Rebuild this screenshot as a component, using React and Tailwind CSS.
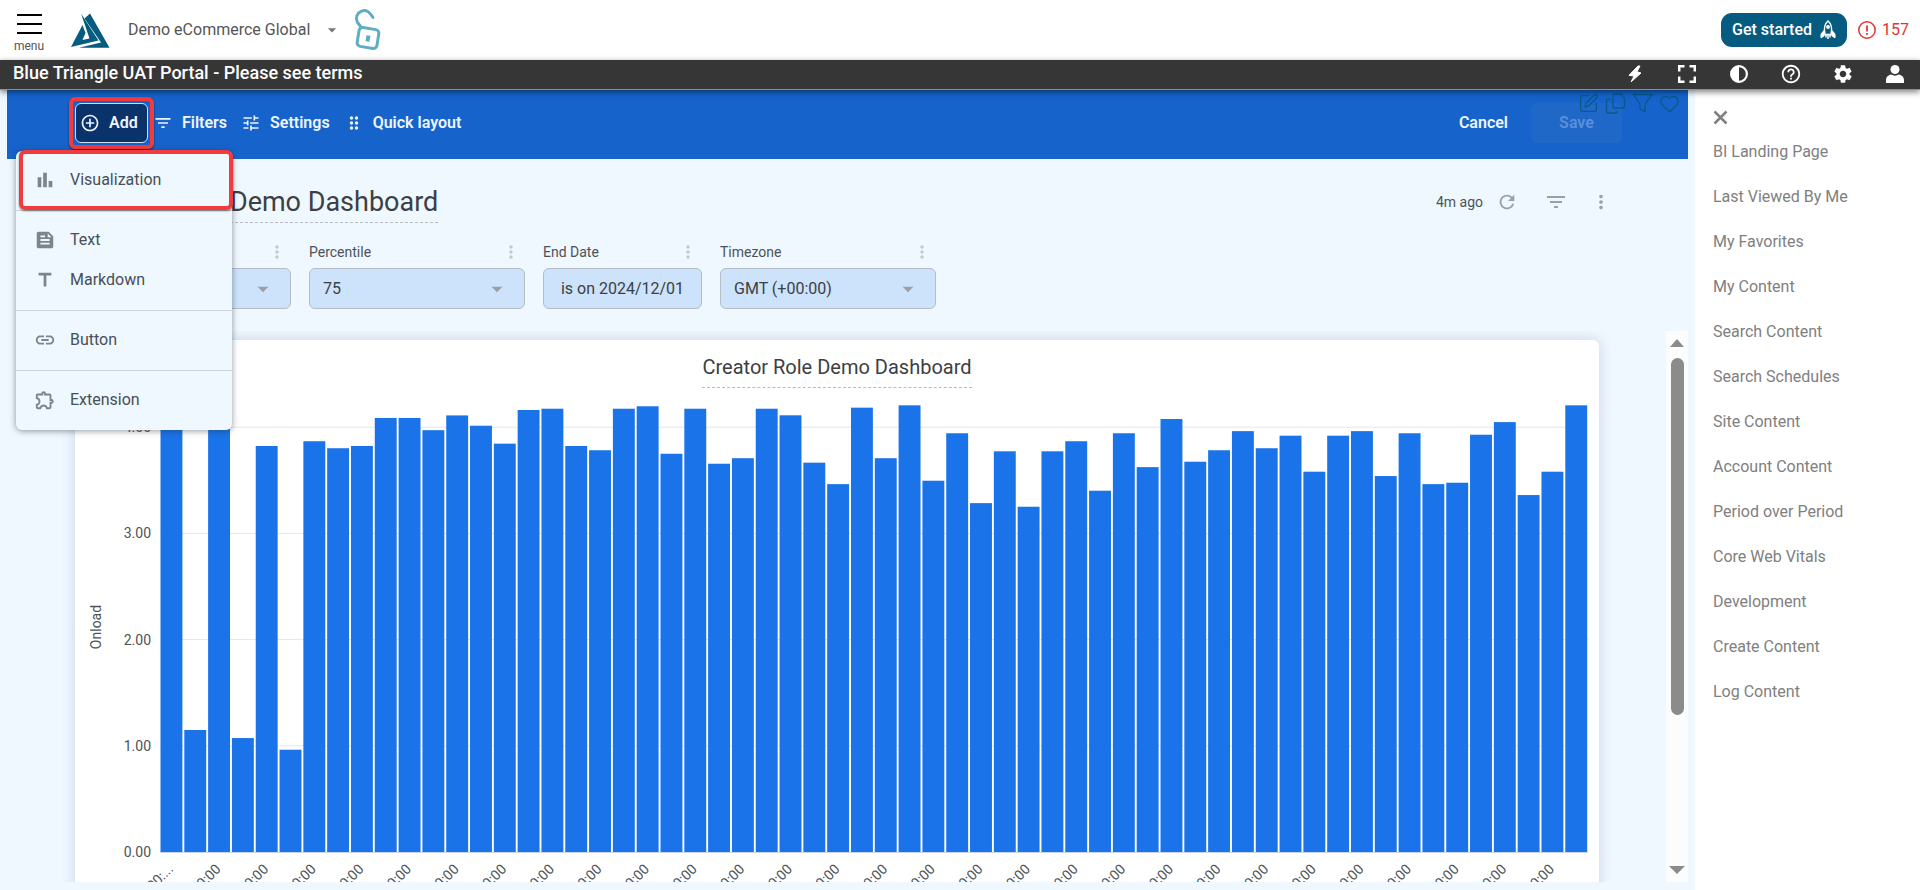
import React, { useState } from 'react';
import {
  MdAddCircleOutline,
  MdArrowDropDown,
  MdBarChart,
  MdDragIndicator,
  MdFeed,
  MdFilterList,
  MdHelpOutline,
  MdLink,
  MdMoreVert,
  MdOutlineExtension,
  MdRefresh,
  MdSettings,
  MdTitle,
  MdTune,
} from 'react-icons/md';
import { FaCircleHalfStroke } from 'react-icons/fa6';
import { Heart, SquarePen } from 'lucide-react';

const ONLOAD = [
  4.1, 1.149, 4.15, 1.073, 3.823, 0.963, 3.868, 3.802, 3.823, 4.087, 4.087, 3.972, 4.111, 4.014, 3.845,
  4.162, 4.174, 3.823, 3.783, 4.174, 4.197, 3.75, 4.174, 3.656, 3.708, 4.174, 4.112, 3.666, 3.464, 4.184,
  3.708, 4.206, 3.496, 3.943, 3.285, 3.773, 3.251, 3.773, 3.868, 3.402, 3.943, 3.624, 4.077, 3.675, 3.783,
  3.963, 3.802, 3.92, 3.581, 3.92, 3.963, 3.54, 3.943, 3.464, 3.477, 3.929, 4.048, 3.361, 3.581, 4.206,
];

const MENU_SECTIONS = [
  [{ label: 'Visualization', icon: MdBarChart, highlighted: true }],
  [
    { label: 'Text', icon: MdFeed },
    { label: 'Markdown', icon: MdTitle },
  ],
  [{ label: 'Button', icon: MdLink }],
  [{ label: 'Extension', icon: MdOutlineExtension }],
];

const SIDE_LINKS = [
  'BI Landing Page',
  'Last Viewed By Me',
  'My Favorites',
  'My Content',
  'Search Content',
  'Search Schedules',
  'Site Content',
  'Account Content',
  'Period over Period',
  'Core Web Vitals',
  'Development',
  'Create Content',
  'Log Content',
];

function Logo() {
  return (
    <svg width="40" height="36" viewBox="0 0 40 36" fill="#055b80">
      <path d="M1 35 12.500 13 15.500 21 12.500 28 19.500 26.500 11 1.500 28.500 28.500Z" />
      <path d="M14.500 6.500 20 1.500 39.500 35.700H9L31 30.500Z" />
    </svg>
  );
}

function OpenLock() {
  return (
    <svg width="28" height="44" viewBox="0 0 28 44" fill="none" stroke="#5fadc4" strokeWidth="3" strokeLinecap="round">
      <path d="M7 19 3.500 14.500C1 10 3 5 7 3.500c5-2.500 8 0 12 6" />
      <rect x="4" y="20.500" width="20" height="19" rx="3.500" transform="rotate(9 14 30)" />
      <path d="m14.500 27.500-1 6" strokeWidth="4" strokeLinecap="butt" />
    </svg>
  );
}

function Rocket() {
  return (
    <svg width="16" height="20" viewBox="0 0 16 20" fill="none" stroke="#fff" strokeWidth="1.500">
      <path d="M5 14.500C3.500 8.500 4.500 4 8 1c3.500 3 4.500 7.500 3 13.500Z" />
      <circle cx="8" cy="7" r="1.200" fill="#fff" />
      <path d="M4 10.500 1 14v4l3.500-2.500M12 10.500l3 3.500v4l-3.500-2.500" fill="#fff" strokeWidth="1" />
      <path d="M8 15v4M6 15v2.500M10 15v2.500" />
    </svg>
  );
}

function Header() {
  return (
    <header className="flex h-[60px] shrink-0 items-center bg-white pr-[11px] pl-[15px]">
      <button type="button" className="mt-2 flex w-7 flex-col items-center text-[12px] leading-4 text-[#555]">
        <svg width="25" height="20" viewBox="0 0 25 20" stroke="#000" strokeWidth="2">
          <path d="M0 1h25M0 10h25M0 19h25" />
        </svg>
        <span className="mt-1">menu</span>
      </button>
      <a href="#home" aria-label="Home" className="ml-[27px]">
        <Logo />
      </a>
      <button type="button" className="ml-[18px] flex items-center gap-3 text-[16px] text-[#555]">
        Demo eCommerce Global
        <MdArrowDropDown size={20} className="text-[#777]" />
      </button>
      <span className="ml-3">
        <OpenLock />
      </span>
      <div className="ml-auto flex items-center gap-[11px]">
        <button
          type="button"
          className="flex h-[34px] items-center gap-2 rounded-[11px] bg-[#055b80] px-[11px] text-[16px] font-medium text-white"
        >
          Get started
          <Rocket />
        </button>
        <a href="#alerts" className="flex items-center gap-[6px] text-[16px] text-[#e23434]">
          <svg width="18" height="18" viewBox="0 0 18 18" fill="none" stroke="currentColor" strokeWidth="1.500">
            <circle cx="9" cy="9" r="8.200" />
            <path d="M9 4.500v6M9 12v1.800" strokeWidth="1.800" />
          </svg>
          157
        </a>
      </div>
    </header>
  );
}

function PortalBar() {
  const iconButton = 'flex size-[18px] items-center justify-center';
  return (
    <div className="relative z-20 flex h-[30px] shrink-0 items-center border-b border-[#8f8f8f] bg-[#363636] pr-4 pb-[1px] pl-[13px] text-white shadow-[0_2px_6px_rgba(0,0,0,0.5)]">
      <span className="pb-[3px] text-[18px] leading-6 font-medium">Blue Triangle UAT Portal - Please see terms</span>
      <div className="ml-auto flex items-center gap-[34px]">
        <button type="button" aria-label="Quick actions" className={iconButton}>
          <svg width="18" height="18" viewBox="0 0 18 18" fill="currentColor" stroke="currentColor" strokeLinejoin="round">
            <path d="M12 1 3 10.300l5 .7-2.800 5.800L15 8l-4-1.200L14 1Z" />
          </svg>
        </button>
        <button type="button" aria-label="Full screen" className={iconButton}>
          <svg width="18" height="18" viewBox="0 0 18 18" fill="none" stroke="currentColor" strokeWidth="2.500">
            <path d="M6.500 1.200H1.200V6.500M11.500 1.200H16.800V6.500M6.500 16.800H1.200V11.500M11.500 16.800H16.800V11.500" />
          </svg>
        </button>
        <button type="button" aria-label="Contrast" className={iconButton}>
          <FaCircleHalfStroke size={18} />
        </button>
        <button type="button" aria-label="Help" className={iconButton}>
          <MdHelpOutline size={22} className="shrink-0" />
        </button>
        <button type="button" aria-label="Settings" className={iconButton}>
          <MdSettings size={22} className="shrink-0" />
        </button>
        <button type="button" aria-label="Profile" className={iconButton}>
          <svg width="18" height="18" viewBox="0 0 18 18" fill="currentColor">
            <circle cx="9" cy="4.500" r="4.500" />
            <path d="M0 18v-3c0-3 2.500-5 5-5.500 2.500 1.500 5.500 1.500 8 0 2.500.5 5 2.500 5 5.500v3Z" />
          </svg>
        </button>
      </div>
    </div>
  );
}

function AddMenu() {
  return (
    <div className="absolute top-12 left-[-59px] z-30 w-[216px] rounded-md bg-[#eff7ff] shadow-[0_1px_6px_rgba(40,50,60,0.5)]">
      {MENU_SECTIONS.map((section) => (
        <div key={section[0].label} className="relative border-b border-[#cdd3da] pt-[9px] pb-[10px] last:border-b-0">
          {section.map(({ label, icon: Icon, highlighted }) => (
            <React.Fragment key={label}>
              <button type="button" className="flex h-10 w-full items-center gap-[14px] pl-[18px] text-[16px] text-[#474f57]">
                <Icon size={22} className="text-[#7d848b]" />
                {label}
              </button>
              {highlighted && (
                <span className="pointer-events-none absolute top-[-1px] right-[-1px] bottom-0 left-[3px] rounded-md border-4 border-[#f23b3f] shadow-[0_1px_2px_rgba(0,0,0,0.5)]" />
              )}
            </React.Fragment>
          ))}
        </div>
      ))}
    </div>
  );
}

function Toolbar({ menuOpen, onToggle }) {
  const toolButton = 'flex h-10 items-center gap-[9px] text-[16px] font-semibold text-[#eef5ff]';
  return (
    <div className="relative flex h-[69px] shrink-0 items-center bg-[#1563cb] pr-[66px] pb-1 pl-[68px]">
      <div className="relative">
        <button
          type="button"
          onClick={onToggle}
          aria-expanded={menuOpen}
          className="flex h-10 w-[73px] items-center gap-[9px] rounded-md border border-[#cfe0f7] bg-[#0b336b] pl-1 text-[16px] font-semibold text-[#eef5ff]"
        >
          <MdAddCircleOutline size={20} />
          Add
        </button>
        <span className="pointer-events-none absolute -inset-[6px] rounded-md border-4 border-[#f23b3f] shadow-[0_1px_2px_rgba(0,0,0,0.6)]" />
        {menuOpen && <AddMenu />}
      </div>
      <button type="button" className={`ml-[5px] ${toolButton}`}>
        <MdFilterList size={20} />
        Filters
      </button>
      <button type="button" className={`ml-[14px] ${toolButton}`}>
        <MdTune size={20} />
        Settings
      </button>
      <button type="button" className={`ml-[14px] ${toolButton}`}>
        <MdDragIndicator size={20} />
        Quick layout
      </button>
      <button type="button" className="ml-auto text-[16px] font-semibold text-[#eef5ff]">
        Cancel
      </button>
      <button type="button" disabled className="ml-[23px] h-10 w-[91px] rounded-md bg-[#1f68c8] text-[16px] font-semibold text-[#5a8fdc]">
        Save
      </button>
      <div className="absolute top-[3px] right-2 flex gap-[6px] text-[#0a5889]">
        <SquarePen size={21} strokeWidth={1.5} />
        <svg width="21" height="21" viewBox="0 0 21 21" fill="none" stroke="currentColor" strokeWidth="1.300" strokeLinejoin="round">
          <path d="M10 1h5.500L19.500 5v8a2 2 0 0 1-2 2H10a2 2 0 0 1-2-2V3a2 2 0 0 1 2-2Z" />
          <path d="M5.500 6H3.500a2 2 0 0 0-2 2v10a2 2 0 0 0 2 2h7a2 2 0 0 0 2-2" />
        </svg>
        <svg width="21" height="21" viewBox="0 0 21 21" fill="none" stroke="currentColor" strokeWidth="1.300" strokeLinejoin="round">
          <path d="M1.500 1.500h18.500L13 11v8l-5-3v-5Z" />
        </svg>
        <Heart size={21} strokeWidth={1.5} />
      </div>
    </div>
  );
}

function FilterField({ id, label, value, width, picker }) {
  const box = 'h-[41px] w-full rounded-md border border-[#b4bcc6] bg-[#cde2fb] text-[16px] text-[#3c4043]';
  return (
    <div className={width}>
      <div className="flex h-6 items-center justify-between pr-1">
        <label htmlFor={id} className="text-[14px] text-[#4c5358]">{label}</label>
        <MdMoreVert size={20} className="text-[#c3c9cf]" />
      </div>
      <div className="relative mt-1">
        {picker ? (
          <button id={id} type="button" className={`${box} text-center`}>{value}</button>
        ) : (
          <>
            <select id={id} className={`${box} appearance-none pl-[13px]`}>
              <option>{value}</option>
            </select>
            <MdArrowDropDown size={26} className="pointer-events-none absolute top-2 right-[15px] text-[#9aa0a6]" />
          </>
        )}
      </div>
    </div>
  );
}

function OnloadChart() {
  const left = 85;
  const base = 464;
  const unit = 106.2;
  const step = 23.81;

  return (
    <svg viewBox="0 0 1524 560" className="block w-full text-[14px]" fill="#4c5358">
      {[1, 2, 3, 4].map((tick) => (
        <path key={tick} d={`M${left} ${base - tick * unit}H1513`} stroke="#e6e6e6" />
      ))}
      {[0, 1, 2, 3, 4].map((tick) => (
        <text key={tick} x="76" y={base - tick * unit + 5} textAnchor="end">{tick.toFixed(2)}</text>
      ))}
      <text x="26" y="239" textAnchor="middle" transform="rotate(-90 26 239)">Onload</text>
      {ONLOAD.map((value, i) => (
        <rect key={i} x={left + 0.5 + i * step} y={base - value * unit} width="21.900" height={value * unit} fill="#1a73e8" />
      ))}
      <path d={`M${left} ${base + 0.5}H1513`} stroke="#ccd6eb" />
      {ONLOAD.map((_, i) => {
        if (i % 2) return null;
        const x = left + i * step + 14;
        return (
          <text key={i} x={x} y="482" textAnchor="end" transform={`rotate(-45 ${x} 482)`}>
            {i === 0 ? '00:...' : '00:00'}
          </text>
        );
      })}
    </svg>
  );
}

function ScrollBar() {
  return (
    <div className="flex w-[22px] shrink-0 flex-col items-center bg-[#fcfcfc] py-2">
      <svg width="16" height="8" viewBox="0 0 16 8" fill="#8b8b8b">
        <path d="M8 0 15 8H1Z" />
      </svg>
      <div className="mt-[11px] w-[13px] grow-[357] rounded-full bg-[#8b8b8b]" />
      <div className="grow-[151]" />
      <svg width="16" height="8" viewBox="0 0 16 8" fill="#8b8b8b">
        <path d="M0 0H16L8 8Z" />
      </svg>
    </div>
  );
}

function Dashboard() {
  return (
    <>
      <div className="flex h-[81px] shrink-0 items-start pt-[25px] pr-[76px] pl-[68px]">
        <h1 className="border-b border-dashed border-[#b5bbc1] pb-[2px] text-[27px] leading-9 text-[#3c4043]">
          Creator Role Demo Dashboard
        </h1>
        <div className="ml-auto flex h-9 items-center text-[#9aa0a6]">
          <span className="text-[14px] text-[#4c5358]">4m ago</span>
          <button type="button" aria-label="Reload" className="ml-[13px]"><MdRefresh size={22} /></button>
          <button type="button" aria-label="Toggle filters" className="ml-[26px]"><MdFilterList size={24} /></button>
          <button type="button" aria-label="Dashboard actions" className="ml-[22px]"><MdMoreVert size={22} /></button>
        </div>
      </div>
      <div className="flex h-[91px] shrink-0 items-start gap-[18px] pl-[68px]">
        <FilterField id="metric" label="Metric" value="Onload" width="w-[216px]" />
        <FilterField id="percentile" label="Percentile" value="75" width="w-[216px]" />
        <FilterField id="end-date" label="End Date" value="is on 2024/12/01" width="w-[159px]" picker />
        <FilterField id="timezone" label="Timezone" value="GMT (+00:00)" width="w-[216px]" />
      </div>
      <div className="flex min-h-0 flex-1">
        <div className="min-w-0 flex-1 overflow-hidden pt-[9px] pr-[67px] pl-[68px]">
          <section className="rounded-md bg-white pt-3 shadow-[0_0_14px_rgba(60,80,110,0.2)]">
            <div className="text-center">
              <h2 className="inline-block h-9 border-b border-dashed border-[#b5bbc1] text-[20px] leading-[30px] text-[#3c4043]">
                Creator Role Demo Dashboard
              </h2>
            </div>
            <OnloadChart />
          </section>
        </div>
        <ScrollBar />
      </div>
    </>
  );
}

function SideNav() {
  return (
    <nav className="w-[225px] shrink-0 bg-white pt-[18px] pl-[18px] text-[16px] text-[#808080]">
      <button type="button" aria-label="Close" className="mb-[2px] flex h-[19px] items-center">
        <svg width="15" height="15" viewBox="0 0 15 15" stroke="currentColor" strokeWidth="2.500">
          <path d="m1.500 1.500 12 12M13.500 1.500l-12 12" />
        </svg>
      </button>
      <ul>
        {SIDE_LINKS.map((label) => (
          <li key={label}>
            <a href="#content" className="flex h-[45px] items-center">{label}</a>
          </li>
        ))}
      </ul>
    </nav>
  );
}

export default function App() {
  const [menuOpen, setMenuOpen] = useState(true);

  return (
    <div className="flex h-screen flex-col overflow-hidden bg-[#eff7ff] font-[Roboto,sans-serif]">
      <Header />
      <PortalBar />
      <div className="flex min-h-0 flex-1">
        <main className="flex min-w-0 flex-1 flex-col px-[7px] pb-2">
          <Toolbar menuOpen={menuOpen} onToggle={() => setMenuOpen(!menuOpen)} />
          <Dashboard />
        </main>
        <SideNav />
      </div>
    </div>
  );
}
